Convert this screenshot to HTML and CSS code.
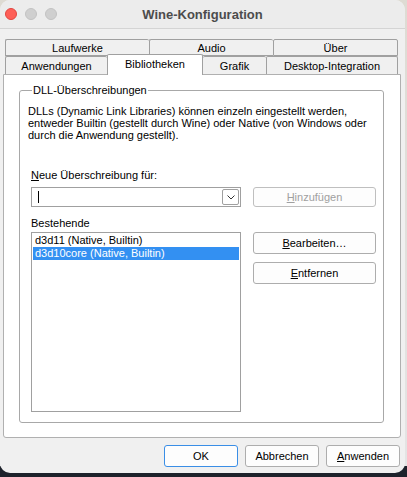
FILE: index.html
```html
<!DOCTYPE html>
<html lang="de">
<head>
<meta charset="utf-8">
<title>Wine-Konfiguration</title>
<link rel="stylesheet" href="styles.css">
</head>
<body>
<div class="window">
  <div class="titlebar">
    <div class="lights">
      <span class="light red"></span>
      <span class="light"></span>
      <span class="light"></span>
    </div>
    <div class="title">Wine-Konfiguration</div>
    <div></div>
  </div>
  <div class="content">
    <div class="tabs">
      <div class="tabrow">
        <div class="tab t-lauf">Laufwerke</div>
        <div class="tab t-audio">Audio</div>
        <div class="tab t-uber">Über</div>
      </div>
      <div class="tabrow">
        <div class="tab t-anw">Anwendungen</div>
        <div class="tab t-bib selected">Bibliotheken</div>
        <div class="tab t-grafik">Grafik</div>
        <div class="tab t-desk">Desktop-Integration</div>
      </div>
    </div>
    <div class="panel">
      <fieldset class="group">
        <legend>DLL-Überschreibungen</legend>
        <p class="desc">DLLs (Dynamic Link Libraries) können einzeln eingestellt werden, entweder Builtin (gestellt durch Wine) oder Native (von Windows oder durch die Anwendung gestellt).</p>
        <div class="label first"><u>N</u>eue Überschreibung für:</div>
        <div class="row">
          <div class="combo">
            <span class="caret"></span>
            <span class="dropbtn">
              <svg width="8" height="5" viewBox="0 0 8 5"><polyline points="0.5,0.5 4,4 7.5,0.5" fill="none" stroke="#333" stroke-width="1"/></svg>
            </span>
          </div>
          <button class="btn disabled add"><u>H</u>inzufügen</button>
        </div>
        <div class="label second">Bestehende</div>
        <div class="row list-row">
          <div class="listbox">
            <div class="item">d3d11 (Native, Builtin)</div>
            <div class="item sel">d3d10core (Native, Builtin)</div>
          </div>
          <div class="side">
            <button class="btn tall"><u>B</u>earbeiten…</button>
            <button class="btn tall"><u>E</u>ntfernen</button>
          </div>
        </div>
      </fieldset>
    </div>
    <div class="footer">
      <button class="btn foot default">OK</button>
      <button class="btn foot">Abbrechen</button>
      <button class="btn foot"><u>A</u>nwenden</button>
    </div>
  </div>
</div>
</body>
</html>
```

FILE: styles.css
```css
* { box-sizing: border-box; }

html, body {
  margin: 0;
  padding: 0;
  width: 407px;
  height: 477px;
  overflow: hidden;
}

body {
  background: linear-gradient(to bottom, #dedbd3 0, #e4e4e4 466px, #1d222b 466px, #1d222b 100%);
  font-family: "Liberation Sans", Arial, sans-serif;
  font-size: 11px;
  color: #000;
}

.window {
  width: 405px;
  height: 473px;
  background: #f0f0f0;
  border-radius: 10px;
  overflow: hidden;
}

.titlebar {
  height: 29px;
  background: #ececec;
  border-bottom: 1px solid #d4d4d4;
  display: grid;
  grid-template-columns: 1fr auto 1fr;
  align-items: center;
}

.lights {
  display: flex;
  gap: 8px;
  padding-left: 5px;
}

.light {
  width: 12px;
  height: 12px;
  border-radius: 50%;
  background: #cfcfcf;
  border: 1px solid #c2c2c2;
}

.light.red {
  background: #fe5f57;
  border-color: #e14640;
}

.title {
  font-weight: bold;
  font-size: 13px;
  color: #4c4c4c;
}

.content {
  padding: 10px 5px 0 3px;
}

.tabs {
  padding-left: 2px;
}

.tabrow {
  display: flex;
}

.tab {
  height: 17px;
  border: 1px solid #a0a0a0;
  border-right: none;
  border-radius: 2px 2px 0 0;
  background: #f0f0f0;
  display: flex;
  align-items: center;
  justify-content: center;
  line-height: 12px;
}

.tab:last-child {
  border-right: 1px solid #a0a0a0;
}

.tabrow + .tabrow .tab {
  height: 18px;
  border-bottom: none;
}

.t-lauf { width: 144px; }
.t-audio { width: 124px; }
.t-uber { width: 125px; }
.t-anw { width: 102px; }
.t-bib { width: 96px; }
.t-grafik { width: 63px; }
.t-desk { width: 132px; }

.tabrow + .tabrow .tab.selected {
  position: relative;
  z-index: 1;
  height: 21px;
  margin-top: -2px;
  margin-bottom: -1px;
  background: #fff;
  border-right: 1px solid #a0a0a0;
  padding-bottom: 2px;
}

.tab.selected + .tab {
  border-left: none;
}

.panel {
  width: 398px;
  height: 364px;
  background: #fff;
  border: 1px solid #b0b0b0;
  border-radius: 0 0 3px 3px;
  padding: 9px 16px 0 15px;
}

.group {
  margin: 0;
  height: 339px;
  border: 1px solid #a8a8a8;
  border-radius: 3px;
  padding: 9px 7px 0 11px;
}

.group legend {
  padding: 0 1px;
  margin-left: 1px;
  line-height: 12px;
  height: 12px;
}

.desc {
  margin: 0 0 0 -3px;
  line-height: 12px;
}

.label {
  line-height: 12px;
}

.label.first { margin-top: 28px; }
.label.second { margin-top: 10px; }

.row {
  display: flex;
  gap: 12px;
  align-items: flex-start;
}

.label.first + .row { margin-top: 6px; }

.combo {
  width: 210px;
  height: 20px;
  border: 1px solid #a0a0a0;
  background: #fff;
  display: flex;
  align-items: center;
  justify-content: space-between;
  padding: 0 1px 0 6px;
}

.caret {
  width: 1px;
  height: 12px;
  background: #000;
}

.dropbtn {
  width: 17px;
  height: 16px;
  border: 1px solid #a0a0a0;
  border-radius: 2px;
  display: flex;
  align-items: center;
  justify-content: center;
}

.btn {
  font-family: "Liberation Sans", Arial, sans-serif;
  font-size: 11px;
  color: #000;
  background: #fdfdfd;
  border: 1px solid #adadad;
  border-radius: 3px;
  padding: 0;
  margin: 0;
  line-height: 12px;
}

.btn.add {
  width: 123px;
  height: 20px;
}

.btn.disabled {
  color: #a0a0a0;
  border-color: #bfbfbf;
}

.list-row { margin-top: 3px; }

.listbox {
  width: 210px;
  height: 180px;
  border: 1px solid #a0a0a0;
  padding: 1px 1px 0 1px;
}

.item {
  height: 13px;
  line-height: 13px;
  padding-left: 2px;
}

.item.sel {
  background: #3390f2;
  color: #fff;
}

.side {
  display: flex;
  flex-direction: column;
  gap: 8px;
}

.btn.tall {
  width: 123px;
  height: 22px;
}

.footer {
  display: flex;
  justify-content: flex-end;
  gap: 7px;
  padding-top: 7px;
}

.btn.foot {
  width: 74px;
  height: 22px;
}

.btn.default {
  border-color: #3a8ee6;
}
```
